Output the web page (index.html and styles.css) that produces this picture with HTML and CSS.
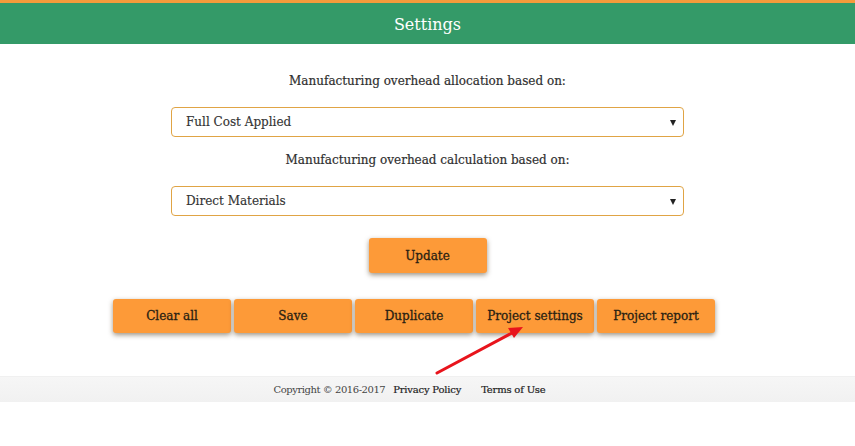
FILE: index.html
```html
<!DOCTYPE html>
<html lang="en">
<head>
<meta charset="utf-8">
<title>Settings</title>
<link rel="stylesheet" href="styles.css">
</head>
<body>
<header class="topbar">Settings</header>
<main class="settings">
  <p class="field-label">Manufacturing overhead allocation based on:</p>
  <div class="select-wrap">
    <select class="select">
      <option>Full Cost Applied</option>
    </select>
  </div>
  <p class="field-label second">Manufacturing overhead calculation based on:</p>
  <div class="select-wrap">
    <select class="select">
      <option>Direct Materials</option>
    </select>
  </div>
  <button class="btn btn-update">Update</button>
  <div class="actions">
    <button class="btn">Clear all</button>
    <button class="btn">Save</button>
    <button class="btn">Duplicate</button>
    <button class="btn">Project settings</button>
    <button class="btn">Project report</button>
  </div>
</main>
<footer class="footer">
  <span class="copy">Copyright © 2016-2017</span>
  <a class="flink" href="#">Privacy Policy</a>
  <a class="flink" href="#">Terms of Use</a>
</footer>
<svg class="annotation" width="855" height="446" viewBox="0 0 855 446">
  <line x1="437" y1="373" x2="512" y2="333" stroke="#e8141c" stroke-width="3" stroke-linecap="round"/>
  <polygon points="523,327 508,328 514,338" fill="#e8141c"/>
</svg>
</body>
</html>
```
FILE: styles.css
```css
* { box-sizing: border-box; }
html, body { margin: 0; padding: 0; background: #fff; }
body {
  width: 855px;
  height: 446px;
  position: relative;
  overflow: hidden;
  font-family: "DejaVu Serif", "Liberation Serif", serif;
  color: #333;
}
.topbar {
  border-top: 3px solid #f59b3b;
  background: #349a68;
  color: #fff;
  height: 44px;
  line-height: 43px;
  text-align: center;
  font-size: 16px;
}
.settings {
  display: flex;
  flex-direction: column;
  align-items: center;
  padding-top: 22px;
}
.field-label {
  margin: 0;
  height: 30px;
  line-height: 30px;
  font-size: 12px;
  color: #2f2f2f;
  -webkit-text-stroke: 0.2px #2f2f2f;
}
.field-label.second { margin-top: 8px; }
.select-wrap {
  position: relative;
  margin-top: 11px;
  width: 513px;
}
.select-wrap::after {
  content: "";
  position: absolute;
  right: 8px;
  top: 13px;
  border-left: 3.5px solid transparent;
  border-right: 3.5px solid transparent;
  border-top: 6px solid #222;
}
.select {
  appearance: none;
  -webkit-appearance: none;
  display: block;
  width: 100%;
  height: 30px;
  border: 1px solid #e0a445;
  border-radius: 4px;
  background: #fff;
  padding: 0 14px;
  font-family: inherit;
  font-size: 12px;
  color: #333;
  -webkit-text-stroke: 0.15px #333;
}
.btn {
  width: 118px;
  height: 34px;
  border: none;
  border-radius: 3px;
  background: #fd9a38;
  color: #2a1f12;
  font-family: inherit;
  font-size: 12px;
  font-weight: 500;
  -webkit-text-stroke: 0.3px #2a1f12;
  box-shadow: 0 2px 5px rgba(60, 40, 10, 0.5);
  padding: 0;
}
.btn-update {
  margin-top: 22px;
  height: 35px;
}
.actions {
  display: flex;
  gap: 3px;
  margin-top: 26px;
  padding-right: 27px;
}
.footer {
  margin-top: 43px;
  height: 26px;
  display: flex;
  justify-content: center;
  align-items: center;
  padding-right: 36px;
  background: linear-gradient(#f6f6f6, #f1f1f1);
  border-top: 1px solid #f0f0f0;
  font-size: 10px;
}
.copy { color: #444; letter-spacing: -0.45px; }
.flink {
  color: #222;
  text-decoration: none;
  font-weight: 500;
  letter-spacing: -0.2px;
  -webkit-text-stroke: 0.2px #222;
  margin-left: 8px;
}
.flink + .flink { margin-left: 20px; }
.annotation {
  position: absolute;
  left: 0;
  top: 0;
  pointer-events: none;
}
```
